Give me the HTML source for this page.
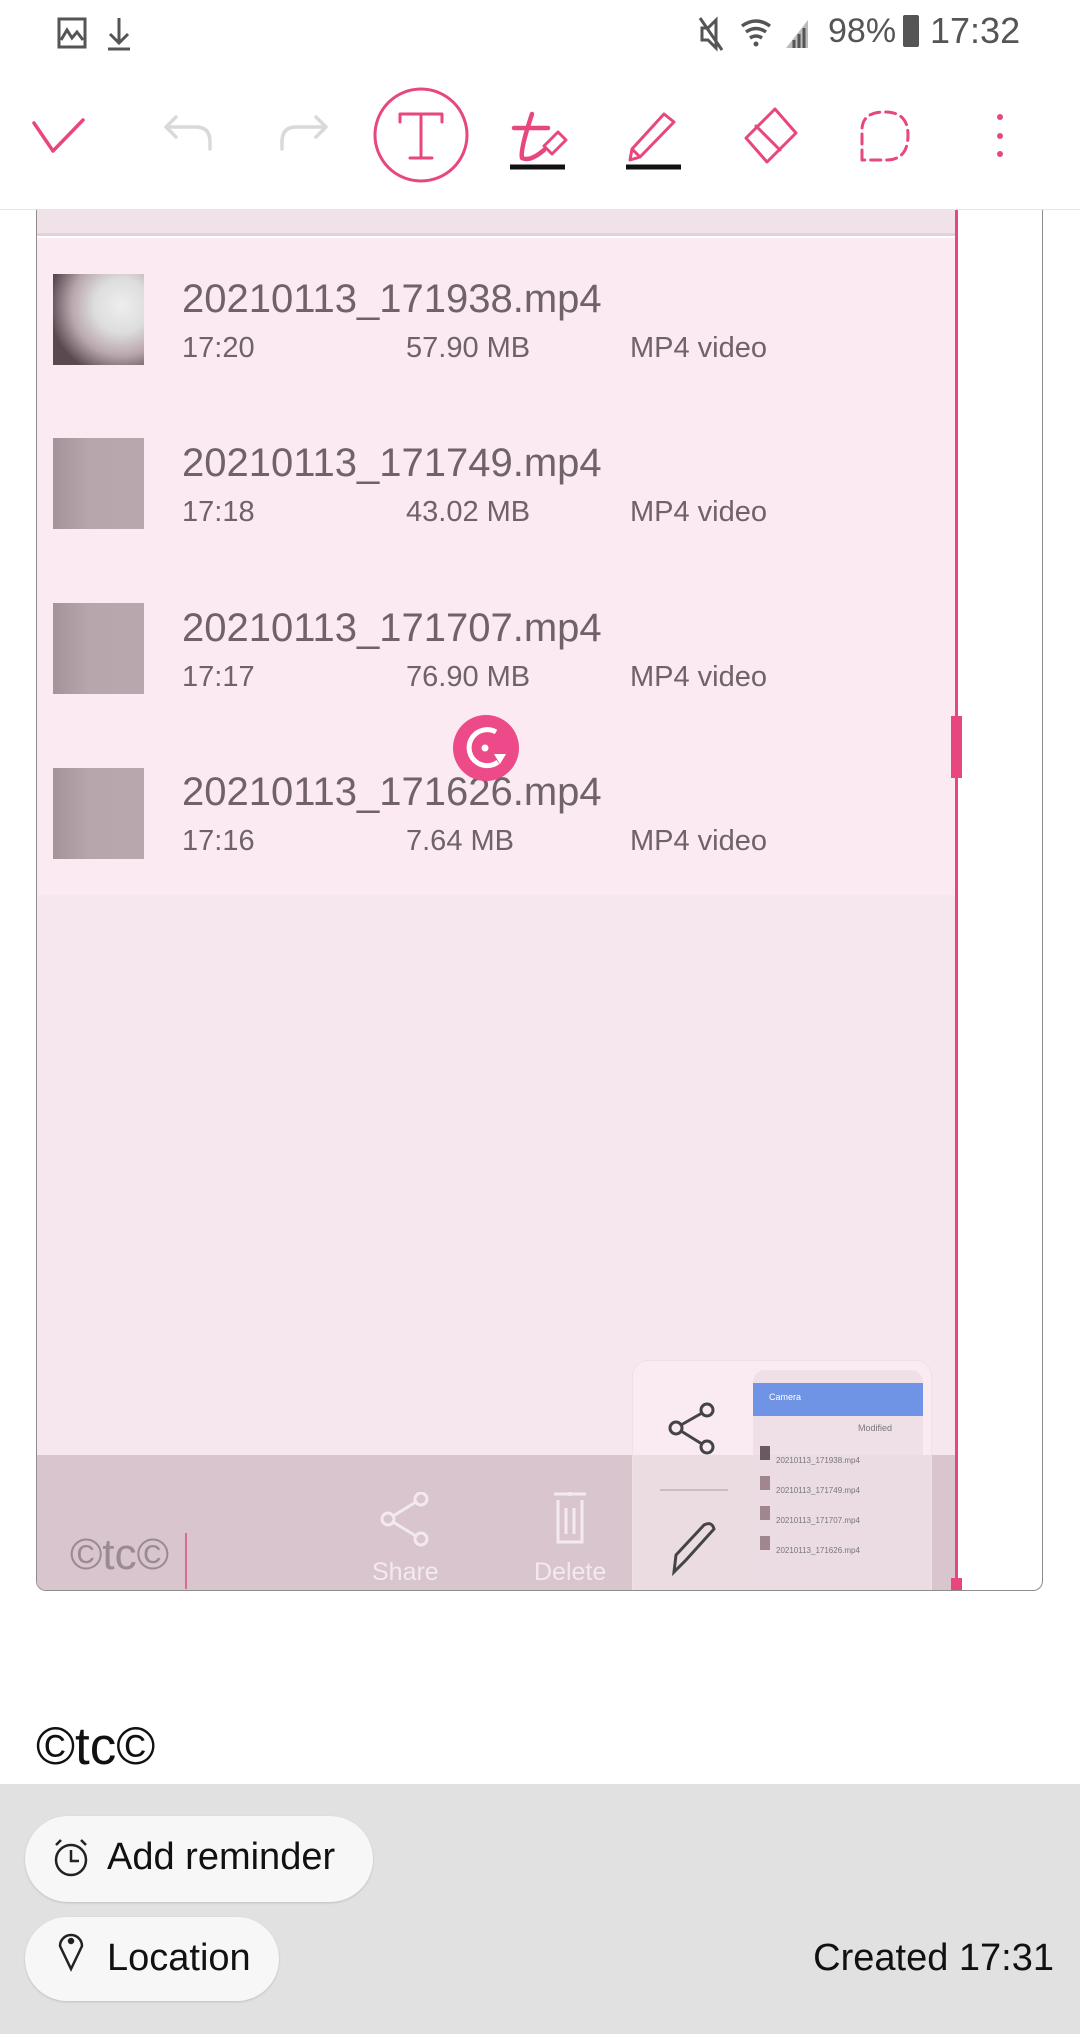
<!DOCTYPE html>
<html><head><meta charset="utf-8"><style>
*{margin:0;padding:0;box-sizing:border-box}
body{width:1080px;height:2034px;background:#fff;font-family:"Liberation Sans",sans-serif;position:relative;overflow:hidden}
.a{position:absolute}
.row .t{position:absolute;left:182px;font-size:40px;color:#6f6268;letter-spacing:0px}
.row .s{position:absolute;font-size:29px;color:#6f6268}
.th{position:absolute;left:53px;width:91px;height:91px;background:linear-gradient(90deg,#a49398,#b7a6ac 40%,#b8a8ad);}
</style></head><body>
<!-- status bar -->
<svg class="a" style="left:56px;top:16px" width="80" height="36" viewBox="0 0 80 36" fill="none" stroke="#555" stroke-width="3">
<rect x="3" y="3" width="26" height="28"/><path d="M5 24 L11 14 L16 22 L21 16 L27 24"/>
<path d="M63 2 V26 M54 18 L63 27 L72 18 M52 33 H74"/></svg>
<svg class="a" style="left:696px;top:14px" width="200" height="40" viewBox="0 0 200 40">
<path d="M6 14 H12 L20 6 V34 L12 26 H6 Z" fill="none" stroke="#555" stroke-width="3"/><path d="M4 4 L26 36" stroke="#555" stroke-width="3"/>
<path d="M46 12 Q60 2 74 12 M50 18 Q60 11 70 18 M54 24 Q60 20 66 24" stroke="#555" stroke-width="3.5" fill="none"/><circle cx="60" cy="30" r="2.5" fill="#555"/>
<path d="M90 34 L112 6 V34 Z" fill="#bbb"/><path d="M98 34 V26 M103 34 V20 M108 34 V14" stroke="#555" stroke-width="3"/></svg>
<div class="a" style="left:828px;top:12px;font-size:34px;color:#555">98%</div>
<div class="a" style="left:903px;top:15px;width:16px;height:32px;background:#555;border-radius:2px"></div>
<div class="a" style="left:930px;top:10px;font-size:36px;color:#555">17:32</div>
<!-- toolbar -->
<svg class="a" style="left:0;top:80px" width="1080" height="130" viewBox="0 80 1080 130" fill="none" stroke-width="3.5" stroke-linecap="round" stroke-linejoin="round">
<path d="M34 123 L53 151 L83 120" stroke="#e8467e"/>
<path d="M176 117 L166 127 L176 137 M166 127 H196 Q210 127 210 142 V149" stroke="#d9d9d9"/>
<path d="M316 117 L326 127 L316 137 M326 127 H296 Q282 127 282 142 V149" stroke="#d9d9d9"/>
<circle cx="421" cy="135" r="46" stroke="#e8467e" stroke-width="3"/>
<path d="M400 114 H442 M400 114 V122 M442 114 V122 M421 114 V158 M410 158 H432" stroke="#e8467e" stroke-width="3"/>
<path d="M532 114 Q520 150 522 158 Q530 162 544 150 M514 128 H548" stroke="#e8467e" stroke-width="4.5"/>
<path d="M544 146 L558 132 L566 140 L552 154 Z" stroke="#e8467e" stroke-width="3"/>
<path d="M510 167 H565" stroke="#111" stroke-width="5" stroke-linecap="butt"/>
<path d="M630 160 L632 149 L664 114 L674 122 L640 157 Z M632 149 L640 157" stroke="#e8467e" stroke-width="3"/>
<path d="M626 167 H681" stroke="#111" stroke-width="5" stroke-linecap="butt"/>
<path d="M775 109 L796 133 L767 162 L746 138 Z M756 126 L780 150" stroke="#e8467e" stroke-width="3"/>
<path d="M862 160 V130 Q862 112 885 112 Q908 112 908 135 Q908 160 886 160 Z" stroke="#e8467e" stroke-width="3" stroke-dasharray="10 6"/>
<circle cx="1000" cy="117" r="3" fill="#e8467e" stroke="none"/><circle cx="1000" cy="136" r="3" fill="#e8467e" stroke="none"/><circle cx="1000" cy="154" r="3" fill="#e8467e" stroke="none"/>
</svg>
<div class="a" style="left:0;top:209px;width:1080px;height:1px;background:#e6e6e6"></div>
<!-- card -->
<div class="a" style="left:36px;top:210px;width:1007px;height:1381px;border:1px solid #8d8d8d;border-top:none;border-radius:0 0 10px 10px;background:#fff;overflow:hidden">
 <div class="a" style="left:0;top:0;width:918px;height:26px;background:#f1e1e8;border-bottom:3px solid #e3d2d9"></div>
 <div class="a" style="left:0;top:28px;width:918px;height:657px;background:#fbeaf2"></div>
 <div class="a" style="left:0;top:685px;width:918px;height:560px;background:#f6e6ee"></div>
 <div class="a" style="left:0;top:1245px;width:918px;height:140px;background:#d8c5cd"></div>
</div>
<div class="a" style="left:955px;top:210px;width:3px;height:1380px;background:#e8467e"></div>
<div class="a" style="left:951px;top:716px;width:11px;height:62px;background:#e8467e"></div>
<div class="a" style="left:951px;top:1578px;width:11px;height:12px;background:#e8467e"></div>
<!-- rows -->
<div class="row">
<div class="th" style="top:274px;background:radial-gradient(circle at 75% 35%,#eee 0,#ddd 30%,#b9a7ae 55%,#5a4a50 80%)"></div>
<div class="t" style="top:277px">20210113_171938.mp4</div>
<div class="s" style="left:182px;top:332px">17:20</div><div class="s" style="left:406px;top:332px">57.90 MB</div><div class="s" style="left:630px;top:332px">MP4 video</div>
</div>
<div class="row">
<div class="th" style="top:438px"></div>
<div class="t" style="top:441px">20210113_171749.mp4</div>
<div class="s" style="left:182px;top:496px">17:18</div><div class="s" style="left:406px;top:496px">43.02 MB</div><div class="s" style="left:630px;top:496px">MP4 video</div>
</div>
<div class="row">
<div class="th" style="top:603px"></div>
<div class="t" style="top:606px">20210113_171707.mp4</div>
<div class="s" style="left:182px;top:661px">17:17</div><div class="s" style="left:406px;top:661px">76.90 MB</div><div class="s" style="left:630px;top:661px">MP4 video</div>
</div>
<div class="row">
<div class="th" style="top:768px"></div>
<div class="t" style="top:770px">20210113_171626.mp4</div>
<div class="s" style="left:182px;top:825px">17:16</div><div class="s" style="left:406px;top:825px">7.64 MB</div><div class="s" style="left:630px;top:825px">MP4 video</div>
</div>
<svg class="a" style="left:452px;top:714px" width="68" height="68" viewBox="0 0 68 68">
<circle cx="34" cy="34" r="33" fill="#ec4a88"/>
<path d="M44 18 A18 18 0 1 0 46 48" stroke="#fff" stroke-width="5" fill="none"/><path d="M42 40 L54 40 L48 50 Z" fill="#fff"/><circle cx="33" cy="34" r="3.5" fill="#fff"/></svg>
<!-- floating panel -->
<div class="a" style="left:632px;top:1360px;width:300px;height:230px;background:rgba(252,238,244,0.55);border:1px solid #efe0e6;border-bottom:none;border-radius:16px 16px 0 0"></div>
<div class="a" style="left:753px;top:1370px;width:170px;height:220px;background:rgba(235,220,228,0.7);border-radius:12px 12px 0 0;overflow:hidden">
 <div class="a" style="left:0;top:13px;width:170px;height:33px;background:#6f94e6"></div>
 <div class="a" style="left:16px;top:22px;font-size:9px;color:#fff">Camera</div>
 <div class="a" style="left:105px;top:53px;font-size:9px;color:#777">Modified</div>
 <div class="a" style="left:7px;top:76px;width:10px;height:14px;background:#6a5a60"></div>
 <div class="a" style="left:7px;top:106px;width:10px;height:14px;background:#a0878f"></div>
 <div class="a" style="left:7px;top:136px;width:10px;height:14px;background:#a0878f"></div>
 <div class="a" style="left:7px;top:166px;width:10px;height:14px;background:#a0878f"></div>
 <div class="a" style="left:23px;top:76px;font-size:8px;color:#777;line-height:30px">20210113_171938.mp4<br>20210113_171749.mp4<br>20210113_171707.mp4<br>20210113_171626.mp4</div>
</div>
<svg class="a" style="left:660px;top:1395px" width="70" height="190" viewBox="0 0 70 190" fill="none" stroke="#444" stroke-width="3">
<circle cx="47" cy="15" r="6"/><circle cx="47" cy="52" r="6"/><circle cx="16" cy="33" r="6"/><path d="M21 30 L42 18 M21 36 L42 49"/>
<path d="M-5 95 H68" stroke="#c3b0b8" stroke-width="1.5"/>
<path d="M14 177 L16 160 L44 130 Q52 126 54 134 L26 165 Z"/>
</svg>
<!-- bottom band icons -->
<svg class="a" style="left:372px;top:1492px" width="230" height="60" viewBox="0 0 230 60" fill="none" stroke="#f3eaee" stroke-width="3">
<circle cx="49" cy="7" r="6"/><circle cx="49" cy="47" r="6"/><circle cx="16" cy="27" r="6"/><path d="M21 24 L44 10 M21 30 L44 44"/>
<path d="M182 2 H214 M198 0 V4 M186 8 V50 H210 V8 M194 16 V42 M202 16 V42"/></svg>
<div class="a" style="left:372px;top:1558px;font-size:25px;color:#f3eaee">Share</div>
<div class="a" style="left:534px;top:1558px;font-size:25px;color:#f3eaee">Delete</div>
<div class="a" style="left:70px;top:1530px;font-size:44px;color:#9a8b91">©tc©</div>
<div class="a" style="left:185px;top:1533px;width:2px;height:56px;background:#d86a95"></div>
<!-- bottom -->
<div class="a" style="left:36px;top:1716px;font-size:53px;color:#111">©tc©</div>
<div class="a" style="left:0;top:1784px;width:1080px;height:250px;background:#e1e1e1"></div>
<div class="a" style="left:25px;top:1816px;width:348px;height:86px;background:#f7f7f7;border-radius:43px;box-shadow:0 1px 2px rgba(0,0,0,.15)"></div>
<div class="a" style="left:25px;top:1917px;width:254px;height:84px;background:#f7f7f7;border-radius:42px;box-shadow:0 1px 2px rgba(0,0,0,.15)"></div>
<svg class="a" style="left:50px;top:1836px" width="40" height="150" viewBox="0 0 40 150" fill="none" stroke="#222" stroke-width="2.5">
<circle cx="21" cy="24" r="15"/><path d="M21 14 V25 H29 M6 9 L11 4 M36 9 L31 4"/>
<path d="M21 133 L10 110 A11 11 0 1 1 32 110 Z"/><circle cx="21" cy="105" r="2" fill="#222"/></svg>
<div class="a" style="left:107px;top:1836px;font-size:38px;color:#111">Add reminder</div>
<div class="a" style="left:107px;top:1937px;font-size:38px;color:#111">Location</div>
<div class="a" style="right:26px;top:1937px;font-size:38px;color:#111">Created 17:31</div>
</body></html>
